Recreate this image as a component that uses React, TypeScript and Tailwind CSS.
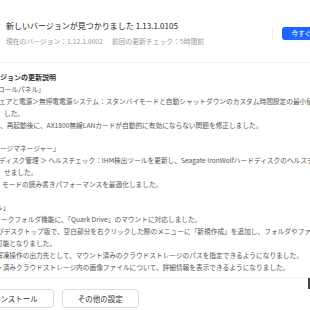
const lines = [
  { key: 'cp', text: 'ロールパネル」', cls: '-ml-[2px]' },
  { key: 'ups', text: 'ェアと電源＞無停電電源システム：スタンバイモードと自動シャットダウンのカスタム時間設定の最小値を調整しま', cls: '-ml-[1px]' },
  { key: 'ups2', text: 'した。', cls: 'ml-[4px]' },
  { key: 'lan', text: '、再起動後に、AX1800無線LANカードが自動的に有効にならない問題を修正しました。', cls: 'ml-0' },
];

const storage = [
  { key: 'sm', text: 'ージマネージャー」', cls: 'ml-0' },
  { key: 'ihm', text: 'ディスク管理 ＞ ヘルスチェック：IHM検出ツールを更新し、Seagate IronWolfハードディスクのヘルスチェックを改善さ', cls: '-ml-[1px]' },
  { key: 'ihm2', text: 'せました。', cls: 'ml-[4px]' },
  { key: 'rw', text: 'モードの読み書きパフォーマンスを最適化しました。', cls: 'ml-[2px]' },
];

const files = [
  { key: 'fl', text: 'ル」', cls: '-ml-[4px]' },
  { key: 'qd', text: 'ークフォルダ機能に、「Quark Drive」のマウントに対応しました。', cls: 'ml-[1px]' },
  { key: 'new', text: 'びデスクトップ版で、空白部分を右クリックした際のメニューに「新規作成」を追加し、フォルダやファイルを作成', cls: '-ml-[3px]' },
  { key: 'new2', text: '可能となりました。', cls: '-ml-[4px]' },
  { key: 'zip', text: '解凍操作の出力先として、マウント済みのクラウドストレージのパスを指定できるようになりました。', cls: '-ml-[4px]' },
  { key: 'img', text: 'ト済みクラウドストレージ内の画像ファイルについて、詳細情報を表示できるようになりました。', cls: '-ml-[4px]' },
];

const Block = ({ items }: { items: { key: string; text: string; cls: string }[] }) => (
  <div className="flex flex-col">
    {items.map((l) => (
      <div key={l.key} className={`h-[12px] leading-[12px] whitespace-nowrap ${l.cls}`}>
        {l.text}
      </div>
    ))}
  </div>
);

export default function App() {
  return (
    <div className="relative w-[310px] h-[310px] overflow-hidden bg-white font-['Noto_Sans_CJK_JP','Noto_Sans',sans-serif]">
      {/* Header */}
      <div className="flex items-center h-[63px] pl-[6px] pt-[4px] border-b border-[#f0f0f0]">
        <div className="flex-1 min-w-0 flex flex-col gap-[4px]">
          <div className="text-[8px] leading-[12px] text-[#222] whitespace-nowrap">
            新しいバージョンが見つかりました 1.13.1.0105
          </div>
          <div className="text-[6.8px] leading-[10px] text-[#9a9a9a] whitespace-nowrap">
            現在のバージョン：1.12.1.0002
            <span className="ml-[9px]">前回の更新チェック：5時間前</span>
          </div>
        </div>
        <div className="flex items-center gap-[9px] shrink-0 -mr-[24px]">
          <div className="w-px h-[12px] bg-[#eeeeee]" />
          <button className="h-[13px] px-[10px] rounded-[3px] bg-[#1d66ff] text-white text-[6.5px] leading-[13px] whitespace-nowrap">
            今すぐ更新
          </button>
        </div>
      </div>

      {/* Release notes */}
      <div className="flex flex-col pt-[8px] text-[6.7px] text-[#555]">
        <div className="h-[12px] leading-[12px] whitespace-nowrap font-semibold text-[7px] text-[#333]">
          ジョンの更新説明
        </div>
        <Block items={lines} />
        <div className="h-[11px]" />
        <Block items={storage} />
        <div className="h-[11px]" />
        <Block items={files} />
      </div>

      <div className="mt-[4px] h-px bg-[#f2f2f2]" />

      {/* Footer buttons */}
      <div className="flex items-center gap-[8px] pt-[11px] -ml-[23px]">
        <button className="h-[19px] px-[15px] rounded-[4px] border border-[#dcdcdc] bg-white text-[7.5px] text-[#333] whitespace-nowrap">
          インストール
        </button>
        <button className="h-[19px] px-[15px] rounded-[4px] border border-[#dcdcdc] bg-white text-[7.5px] text-[#333] whitespace-nowrap">
          その他の設定
        </button>
      </div>

      <div className="absolute right-0 top-[278px] w-[2px] h-[11px] bg-[#444]" />
    </div>
  );
}
